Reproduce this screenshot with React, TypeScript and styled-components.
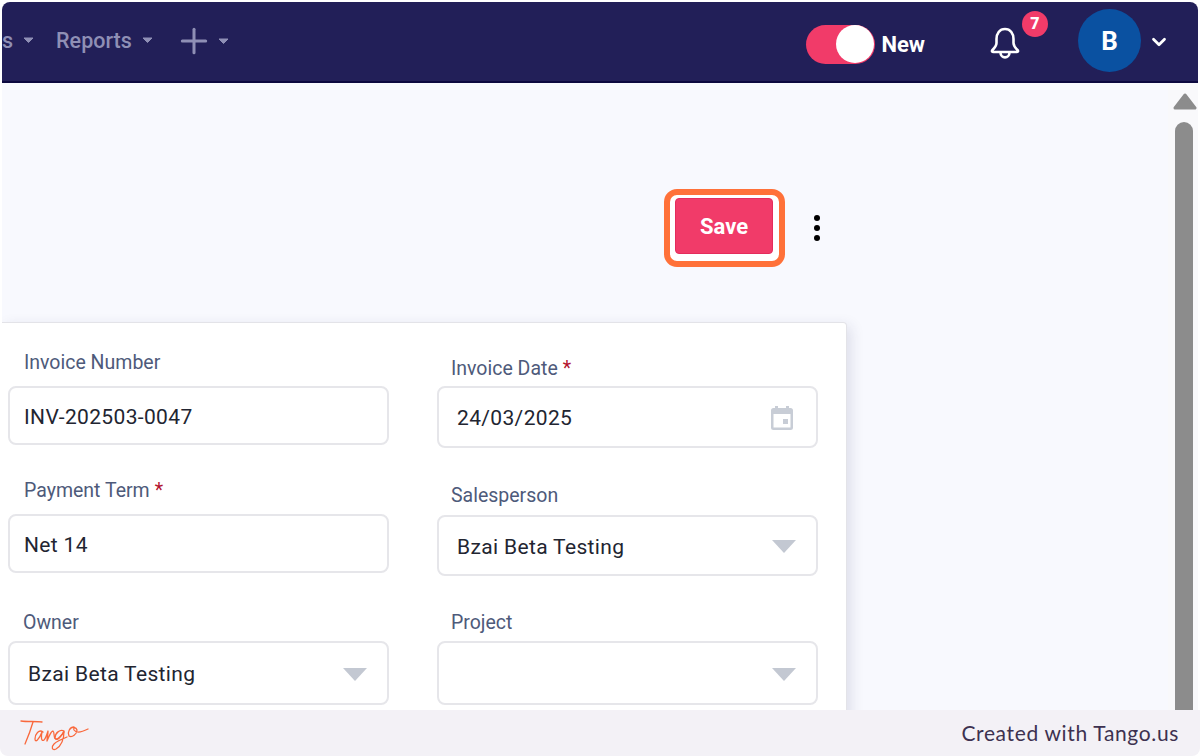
import styled, { createGlobalStyle } from "styled-components";
import { ChevronDown, Plus } from "lucide-react";

const GlobalStyle = createGlobalStyle`
  html, body {
    margin: 0;
    padding: 0;
    background: #ffffff;
  }
  * {
    box-sizing: border-box;
  }
`;

function Caret() {
  return (
    <svg width="11" height="6" viewBox="0 0 11 6">
      <path d="M1 1h9L5.5 5.5z" fill="#8f8fb5" stroke="#8f8fb5" strokeLinejoin="round" />
    </svg>
  );
}

function SelectArrow() {
  return (
    <svg width="24" height="13" viewBox="0 0 24 13">
      <path d="M0 0h24L12 13z" fill="#c3c8d2" />
    </svg>
  );
}

function CalendarIcon() {
  return (
    <svg width="26" height="26" viewBox="0 0 26 26">
      <path
        d="M5 1h3v2h8V1h3v2h1.5A2.5 2.5 0 0 1 23 5.500V22.500A2.500 2.500 0 0 1 20.500 25H3.500A2.500 2.500 0 0 1 1 22.500V5.500A2.500 2.500 0 0 1 3.500 3H5zM3.500 9v13.500h17V9z"
        fill="#c8cdd6"
      />
      <rect x="13" y="14" width="5" height="5" fill="#c8cdd6" />
    </svg>
  );
}

function BellIcon() {
  return (
    <svg width="30" height="34" viewBox="0 0 30 34" fill="none" stroke="#ffffff" strokeWidth="2.600" strokeLinecap="round" strokeLinejoin="round">
      <path d="M15 2C9.500 2 6.500 6.500 6.500 12V16C6.500 19 4.500 21 2.500 23C1.500 24 2 25 3.500 25H26.500C28 25 28.500 24 27.500 23C25.500 21 23.500 19 23.500 16V12C23.500 6.500 20.500 2 15 2Z" />
      <path d="M10.500 25.500C10.500 32 19.500 32 19.500 25.500" />
    </svg>
  );
}

function ScrollUpIcon() {
  return (
    <svg width="24" height="18" viewBox="0 0 24 18">
      <path d="M12 2L22 15H2z" fill="#8c8c8c" stroke="#8c8c8c" strokeWidth="3" strokeLinejoin="round" />
    </svg>
  );
}

function TangoLogo() {
  return (
    <svg width="70" height="36" viewBox="0 0 70 36" fill="none" stroke="#f9683c" strokeWidth="1.300" strokeLinecap="round" strokeLinejoin="round">
      <path d="M1 5C8 6 15 5 22 6" />
      <path d="M13 6C11 13 8 21 5 28" />
      <path d="M23 16C19 13 15 18 15 23C15 27 19 24 22 16C21 20 21 26 24 24C26 22 27 18 28 15C28 19 27 22 27 25C29 20 31 15 33 15C35 16 33 23 36 23C39 23 42 18 44 16" />
      <path d="M44 15C40 13 35 17 35 22C37 26 42 20 44 15C44 23 41 30 36 33C32 35 31 31 34 28C37 25 42 23 47 21" />
      <path d="M54 11C50 11 47 16 49 20C52 22 57 18 57 14C56 11 53 11 54 14C56 17 62 16 68 13" />
    </svg>
  );
}

const fieldsLeft = [
  { label: "Invoice Number", value: "INV-202503-0047", mt: 29, labelX: 16, textX: 16, gap: 14, h: 59 },
  { label: "Payment Term", value: "Net 14", required: true, mt: 35, labelX: 16, textX: 16, gap: 14, h: 59 },
  { label: "Owner", value: "Bzai Beta Testing", select: true, mt: 39, labelX: 15, textX: 20, gap: 9, h: 64 },
];

const fieldsRight = [
  { label: "Invoice Date", value: "24/03/2025", required: true, date: true, mt: 35, labelX: 14, textX: 20, gap: 8, h: 62 },
  { label: "Salesperson", value: "Bzai Beta Testing", select: true, mt: 37, labelX: 14, textX: 20, gap: 10, h: 61 },
  { label: "Project", value: "", select: true, mt: 36, labelX: 14, textX: 20, gap: 9, h: 64 },
];

type FieldData = {
  label: string;
  value: string;
  mt: number;
  labelX: number;
  textX: number;
  gap: number;
  h: number;
  required?: boolean;
  select?: boolean;
  date?: boolean;
};

function FormField({ field }: { field: FieldData }) {
  return (
    <Field $mt={field.mt} $gap={field.gap}>
      <Label $x={field.labelX}>
        {field.label}
        {field.required && <Required>*</Required>}
      </Label>
      <InputBox $h={field.h} $x={field.textX}>
        <span>{field.value}</span>
        {field.select && <SelectArrow />}
        {field.date && <CalendarIcon />}
      </InputBox>
    </Field>
  );
}

export default function App() {
  return (
    <>
      <GlobalStyle />
      <Page>
        <Header>
          <Nav>
            <NavItem>
              s <Caret />
            </NavItem>
            <NavItem>
              Reports <Caret />
            </NavItem>
            <PlusItem>
              <Plus size={40} strokeWidth={1.800} color="#8f8fb5" />
              <Caret />
            </PlusItem>
          </Nav>
          <HeaderRight>
            <ToggleGroup>
              <Toggle>
                <ToggleKnob />
              </Toggle>
              <ToggleLabel>New</ToggleLabel>
            </ToggleGroup>
            <BellWrap>
              <BellIcon />
              <Badge>7</Badge>
            </BellWrap>
            <Avatar>B</Avatar>
            <ChevronDown size={22} strokeWidth={3} color="#ffffff" />
          </HeaderRight>
        </Header>
        <Body>
          <Main>
            <Actions>
              <SaveFocus>
                <SaveButton>Save</SaveButton>
              </SaveFocus>
              <Kebab>
                <Dot />
                <Dot />
                <Dot />
              </Kebab>
            </Actions>
            <Card>
              <Column $pad={6}>
                {fieldsLeft.map((f) => (
                  <FormField key={f.label} field={f} />
                ))}
              </Column>
              <Column $pad={0}>
                {fieldsRight.map((f) => (
                  <FormField key={f.label} field={f} />
                ))}
              </Column>
            </Card>
          </Main>
          <Scrollbar>
            <ScrollUpIcon />
            <ScrollThumb />
          </Scrollbar>
        </Body>
        <Footer>
          <TangoLogo />
          <FooterText>Created with Tango.us</FooterText>
        </Footer>
      </Page>
    </>
  );
}

const Page = styled.div`
  width: 1200px;
  height: 756px;
  padding: 2px 0 0 2px;
  display: flex;
  flex-direction: column;
  overflow: hidden;
  background: #ffffff;
  font-family: Roboto, "Liberation Sans", sans-serif;
`;

const Header = styled.header`
  height: 81px;
  flex-shrink: 0;
  margin-right: 2px;
  display: flex;
  align-items: center;
  justify-content: space-between;
  background: #221f58;
  border-bottom: 2px solid #0d0940;
  border-radius: 8px 8px 0 0;
  overflow: hidden;
`;

const Nav = styled.nav`
  display: flex;
  align-items: center;
  height: 100%;
  padding-bottom: 3px;
`;

const NavItem = styled.div`
  display: flex;
  align-items: center;
  gap: 10px;
  margin-right: 22px;
  font-size: 21.500px;
  font-weight: 500;
  color: #8f8fb5;
`;

const PlusItem = styled.div`
  display: flex;
  align-items: center;
  gap: 4px;
  margin: 2px 0 0 -1px;
`;

const HeaderRight = styled.div`
  display: flex;
  align-items: center;
  height: 100%;
  padding-right: 28px;
`;

const ToggleGroup = styled.div`
  display: flex;
  align-items: center;
  gap: 6px;
  margin: 5px 65px 0 0;
`;

const Toggle = styled.div`
  width: 69px;
  height: 39px;
  padding-left: 30px;
  display: flex;
  align-items: center;
  border-radius: 20px;
  background: #f13b69;
`;

const ToggleKnob = styled.div`
  width: 38px;
  height: 38px;
  border-radius: 50%;
  background: #ffffff;
`;

const ToggleLabel = styled.span`
  font-size: 22px;
  font-weight: 700;
  color: #ffffff;
`;

const BellWrap = styled.div`
  position: relative;
  display: flex;
  margin: 4px 58px 0 0;
`;

const Badge = styled.div`
  position: absolute;
  top: -16px;
  left: 32px;
  width: 26px;
  height: 26px;
  display: flex;
  align-items: center;
  justify-content: center;
  border-radius: 50%;
  background: #f13b69;
  color: #ffffff;
  font-size: 16px;
  font-weight: 900;
`;

const Avatar = styled.div`
  width: 63px;
  height: 63px;
  margin: -2px 7px 0 0;
  display: flex;
  align-items: center;
  justify-content: center;
  border-radius: 50%;
  background: #0a51a1;
  color: #ffffff;
  font-size: 26px;
  font-weight: 700;
`;

const Body = styled.div`
  flex: 1;
  min-height: 0;
  margin-right: 2px;
  display: flex;
  overflow: hidden;
`;

const Main = styled.main`
  flex: 1;
  min-width: 0;
  background: #f8f9fe;
`;

const Actions = styled.div`
  width: 845px;
  height: 239px;
  padding: 106px 26px 0 0;
  display: flex;
  align-items: flex-start;
  justify-content: flex-end;
  gap: 28px;
`;

const SaveFocus = styled.div`
  width: 121px;
  height: 78px;
  padding: 3px 6px 7px 5px;
  display: flex;
  border: 6px solid #ff7139;
  border-radius: 13px;
  background: #ffffff;
`;

const SaveButton = styled.button`
  flex: 1;
  border: 1px solid #e42c5c;
  border-radius: 4px;
  background: #f13b69;
  color: #ffffff;
  font-family: Roboto, "Liberation Sans", sans-serif;
  font-size: 22px;
  font-weight: 700;
`;

const Kebab = styled.div`
  width: 8px;
  height: 77px;
  display: flex;
  flex-direction: column;
  align-items: center;
  justify-content: center;
  gap: 4px;
`;

const Dot = styled.div`
  width: 6px;
  height: 6px;
  border-radius: 50%;
  background: #000000;
`;

const Card = styled.section`
  width: 845px;
  height: 520px;
  display: flex;
  gap: 49px;
  background: #ffffff;
  border: 1px solid #e3e3e8;
  border-left: none;
  border-radius: 0 4px 0 0;
  box-shadow: 4px 4px 14px rgba(40, 40, 90, 0.13);
`;

const Column = styled.div<{ $pad: number }>`
  width: ${({ $pad }) => 380 + $pad}px;
  padding-left: ${({ $pad }) => $pad}px;
  display: flex;
  flex-direction: column;
`;

const Field = styled.div<{ $mt: number; $gap: number }>`
  margin-top: ${({ $mt }) => $mt}px;
  display: flex;
  flex-direction: column;
  gap: ${({ $gap }) => $gap}px;
`;

const Label = styled.label<{ $x: number }>`
  height: 20px;
  padding-left: ${({ $x }) => $x}px;
  font-size: 19.500px;
  line-height: 22px;
  color: #4e5a7a;
`;

const Required = styled.span`
  margin-left: 5px;
  color: #b3132f;
`;

const InputBox = styled.div<{ $h: number; $x: number }>`
  width: 381px;
  height: ${({ $h }) => $h}px;
  padding: 2px 20px 0 ${({ $x }) => $x - 2}px;
  display: flex;
  align-items: center;
  justify-content: space-between;
  border: 2px solid #e6e6ea;
  border-radius: 8px;
  background: #ffffff;
  font-size: 21px;
  letter-spacing: 0.35px;
  color: #222531;
`;

const Scrollbar = styled.div`
  width: 30px;
  padding: 10px 0 0 5px;
  display: flex;
  flex-direction: column;
  gap: 11px;
  flex-shrink: 0;
  background: #f9f9fb;
`;

const ScrollThumb = styled.div`
  width: 18px;
  margin-left: 2px;
  flex: 1;
  border-radius: 9px 9px 0 0;
  background: #8c8c8c;
`;

const Footer = styled.footer`
  height: 46px;
  margin-left: -2px;
  padding: 6px 21px 0 20px;
  flex-shrink: 0;
  display: flex;
  align-items: flex-start;
  justify-content: space-between;
  background: #f3f1f6;
  border-radius: 0 0 8px 8px;
`;

const FooterText = styled.span`
  margin-top: 4px;
  font-family: Lato, sans-serif;
  font-size: 21px;
  letter-spacing: 0.65px;
  color: #3d3150;
`;
